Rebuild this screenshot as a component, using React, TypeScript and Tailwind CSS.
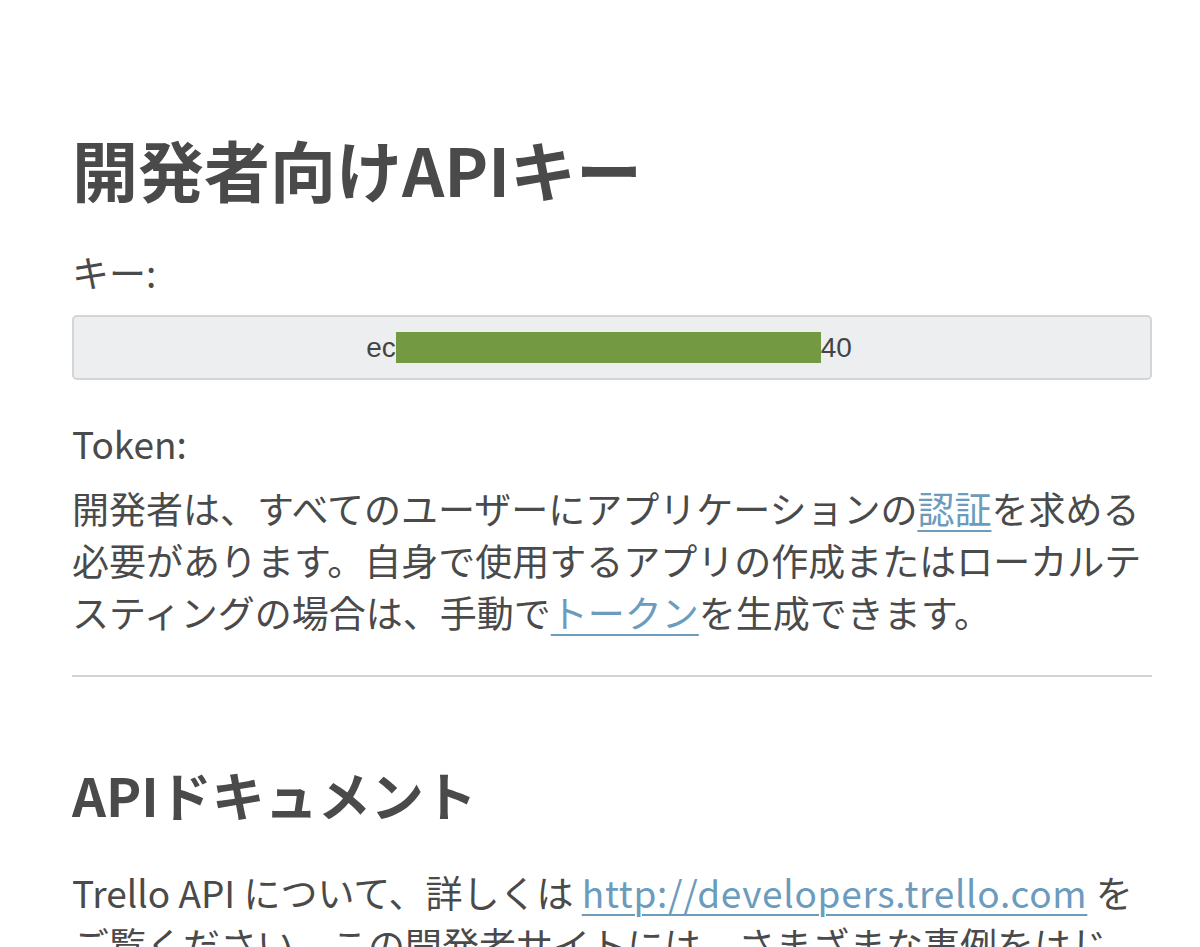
export default function App() {
  const font = { fontFamily: '"Noto Sans CJK JP", "Noto Sans", sans-serif' }
  return (
    <div
      className="h-screen overflow-hidden bg-white pl-[72px] pr-[48px] pt-[130px] text-[#4a4a4a]"
      style={font}
    >
      {/* Developer API key */}
      <h1 className="text-[66px] font-bold leading-[77px]">開発者向けAPIキー</h1>

      <p className="mt-[39px] text-[37px] leading-[52px]">キー:</p>
      <div className="mt-[17px] flex h-[65px] items-center justify-center rounded-[5px] border-2 border-[#d4d5d7] bg-[#edeef0] pr-[6px] font-['Liberation_Sans',sans-serif] text-[28px] text-[#444]">
        <span>ec</span>
        <span className="inline-block h-[31px] w-[425px] bg-[#739a43]" />
        <span>40</span>
      </div>

      <p className="mt-[37px] text-[37px] leading-[52px]">Token:</p>
      <p className="mt-[13px] text-[37px] leading-[52px]">
        開発者は、すべてのユーザーにアプリケーションの
        <a className="text-[#6b9bbd] underline decoration-2 underline-offset-[6px]">認証</a>
        を求める必要があります。自身で使用するアプリの作成またはローカルテスティングの場合は、手動で
        <a className="text-[#6b9bbd] underline decoration-2 underline-offset-[6px]">トークン</a>
        を生成できます。
      </p>

      <hr className="mt-[37px] border-t-2 border-[#d3d3d3]" />

      {/* API docs */}
      <h2 className="mt-[86px] text-[53px] font-bold leading-[62px]">APIドキュメント</h2>
      <p className="mt-[41px] text-[37px] leading-[52px]">
        Trello API について、詳しくは{' '}
        <a className="tracking-[0.7px] text-[#6b9bbd] underline decoration-2 underline-offset-[6px]">
          http://developers.trello.com
        </a>{' '}
        をご覧ください。この開発者サイトには、さまざまな事例をはじめ、API の使い方に関する情報が掲載されています。
      </p>
    </div>
  )
}
